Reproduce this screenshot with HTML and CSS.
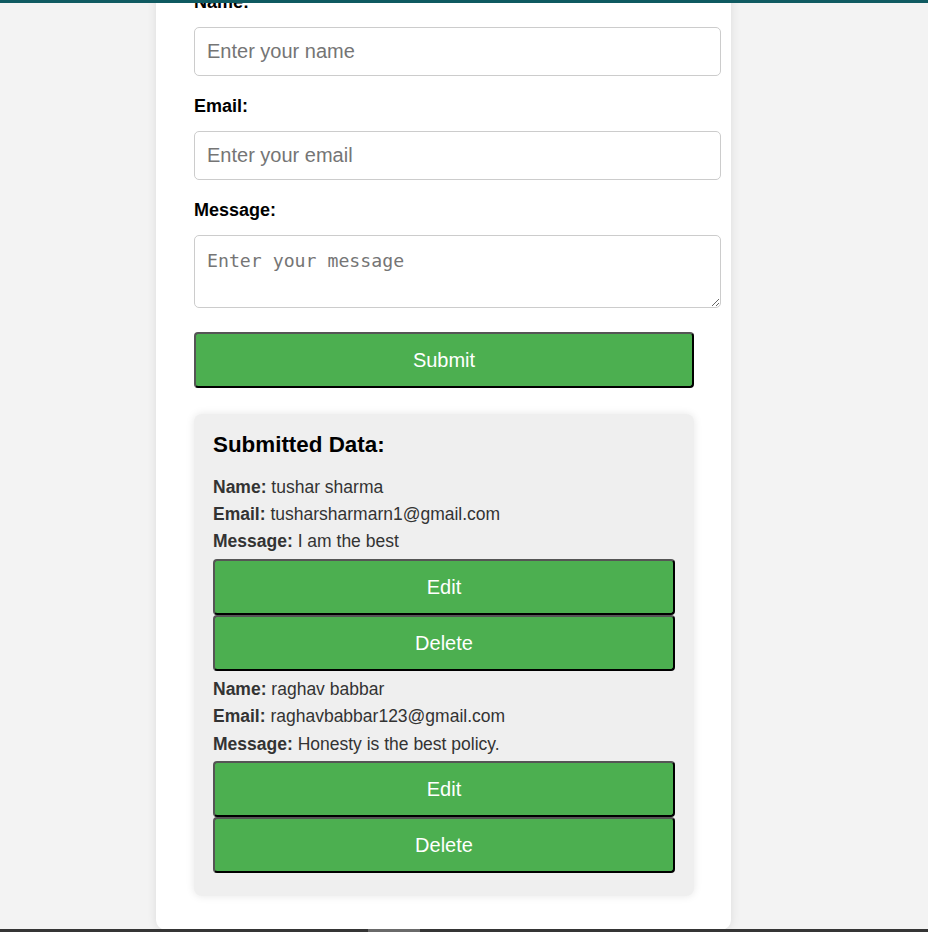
FILE: index.html
```html
<!DOCTYPE html>
<html lang="en">
<head>
<meta charset="utf-8">
<title>Form</title>
<link rel="stylesheet" href="styles.css">
</head>
<body>
<div class="topbar"></div>
<main class="card">
  <form class="form">
    <label for="name">Name:</label>
    <input id="name" type="text" placeholder="Enter your name">
    <label for="email">Email:</label>
    <input id="email" type="email" placeholder="Enter your email">
    <label for="message">Message:</label>
    <textarea id="message" placeholder="Enter your message"></textarea>
    <button class="btn" type="button">Submit</button>
  </form>
  <section class="submitted">
    <h3>Submitted Data:</h3>
    <div class="entry">
      <p><strong>Name:</strong> tushar sharma</p>
      <p><strong>Email:</strong> tusharsharmarn1@gmail.com</p>
      <p><strong>Message:</strong> I am the best</p>
      <button class="btn btn-edit" type="button">Edit</button>
      <button class="btn" type="button">Delete</button>
    </div>
    <div class="entry">
      <p><strong>Name:</strong> raghav babbar</p>
      <p><strong>Email:</strong> raghavbabbar123@gmail.com</p>
      <p><strong>Message:</strong> Honesty is the best policy.</p>
      <button class="btn btn-edit" type="button">Edit</button>
      <button class="btn" type="button">Delete</button>
    </div>
  </section>
</main>
<div class="bottombar"><span class="thumb"></span></div>
</body>
</html>
```
FILE: styles.css
```css
html, body {
  margin: 0;
  padding: 0;
}
body {
  background: #f3f3f3;
  font-family: "Liberation Sans", Arial, sans-serif;
  color: #000;
  overflow: hidden;
}
.topbar {
  position: fixed;
  top: 0;
  left: 0;
  right: 0;
  height: 3px;
  background: #0f5a61;
  z-index: 10;
}
.bottombar {
  position: fixed;
  left: 0;
  right: 0;
  bottom: 0;
  height: 3px;
  background: #353535;
  z-index: 10;
}
.bottombar .thumb {
  position: absolute;
  left: 368px;
  width: 52px;
  top: 0;
  bottom: 0;
  background: #6a6a6a;
}
.card {
  display: block;
  width: 500px;
  margin: -46px 0 0 156px;
  padding: 38px 37px 34px 38px;
  background: #fff;
  border-radius: 10px;
  box-shadow: 0 0 10px rgba(0, 0, 0, 0.1);
}
.form label {
  display: block;
  margin: 0 0 14px;
  font-size: 18px;
  line-height: 21px;
  font-weight: bold;
}
.form input {
  display: block;
  width: 100%;
  margin: 0 0 20px;
  padding: 12px 13px 12px 12px;
  border: 1px solid #ccc;
  border-radius: 5px;
  font-family: "Liberation Sans", Arial, sans-serif;
  font-size: 20px;
  line-height: 23px;
  color: #000;
  outline: none;
}
.form textarea {
  display: block;
  box-sizing: border-box;
  width: calc(100% + 27px);
  height: 73px;
  margin: 0 0 24.3px;
  padding: 12px;
  border: 1px solid #ccc;
  border-radius: 5px;
  font-family: "DejaVu Sans Mono", "Liberation Mono", monospace;
  font-size: 18.2px;
  line-height: 25px;
  outline: none;
}
.form input::placeholder,
.form textarea::placeholder {
  color: #757575;
}
.btn {
  display: block;
  width: 100%;
  margin: 0;
  padding: 14.5px 10px;
  background: #4caf50;
  color: #fff;
  font-family: "Liberation Sans", Arial, sans-serif;
  font-size: 20px;
  line-height: 23px;
  border-width: 2px;
  border-style: solid;
  border-color: #555 #000 #000 #555;
  border-radius: 4px;
  cursor: pointer;
}
.submitted {
  margin-top: 25.7px;
  padding: 18.5px 19px 22.5px;
  background: #efefef;
  border-radius: 8px;
  box-shadow: 0 0 8px rgba(0, 0, 0, 0.1);
}
.submitted h3 {
  margin: 0 0 18.5px;
  font-size: 22.4px;
  line-height: 26px;
  font-weight: bold;
  color: #000;
}
.entry + .entry {
  margin-top: 8px;
}
.entry p {
  margin: 0;
  font-size: 17.5px;
  line-height: 20.2px;
  color: #333;
}
.entry p + p {
  margin-top: 7px;
}
.entry .btn-edit {
  margin-top: 7.5px;
}
```
